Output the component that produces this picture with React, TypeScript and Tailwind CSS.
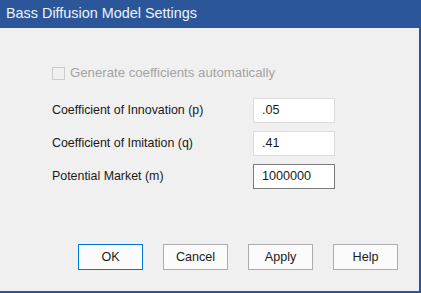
import React from "react";

export default function App() {
  const font = { fontFamily: '"Liberation Sans", Arial, sans-serif' };
  const rows = [
    { label: "Coefficient of Innovation (p)", value: ".05", focus: false },
    { label: "Coefficient of Imitation (q)", value: ".41", focus: false },
    { label: "Potential Market (m)", value: "1000000", focus: true },
  ];
  return (
    <div
      className="w-[421px] h-[293px] flex flex-col bg-[#f0f0f0] border-r-2 border-b-2 border-[#2b579a] overflow-hidden"
      style={font}
    >
      <div className="h-[28px] shrink-0 bg-[#2b579a] flex items-center pl-[6px] text-[14.4px] text-[#eef2f9]">
        Bass Diffusion Model Settings
      </div>
      <div className="flex-1 flex flex-col pl-[52px] pt-[38px] pr-[21px] pb-[21px]">
        <div className="flex items-center h-[14px] gap-[5px] text-[13.2px] text-[#a3a3a3]">
          <div className="w-[13px] h-[13px] border border-[#cccccc] bg-[#f0f0f0]" />
          <span>Generate coefficients automatically</span>
        </div>
        <div className="flex flex-col gap-[8px] mt-[18px]">
          {rows.map((r) => (
            <div key={r.label} className="flex items-center h-[25px]">
              <span className="w-[201px] text-[12.4px] text-[#1a1a1a]">{r.label}</span>
              <div
                className={
                  "w-[82px] h-[25px] bg-white flex items-center pl-[8px] text-[12.6px] text-[#1a1a1a] border " +
                  (r.focus ? "border-[#7a7a7a]" : "border-[#dcdcdc]")
                }
              >
                {r.value}
              </div>
            </div>
          ))}
        </div>
        <div className="flex-1" />
        <div className="flex justify-end gap-[20px]">
          {["OK", "Cancel", "Apply", "Help"].map((b) => (
            <div
              key={b}
              className={
                "w-[65px] h-[26px] flex items-center justify-center text-[12.6px] text-[#1a1a1a] bg-[#fbfbfb] border " +
                (b === "OK" ? "border-[#0078d7]" : "border-[#adadad]")
              }
            >
              {b}
            </div>
          ))}
        </div>
      </div>
    </div>
  );
}
